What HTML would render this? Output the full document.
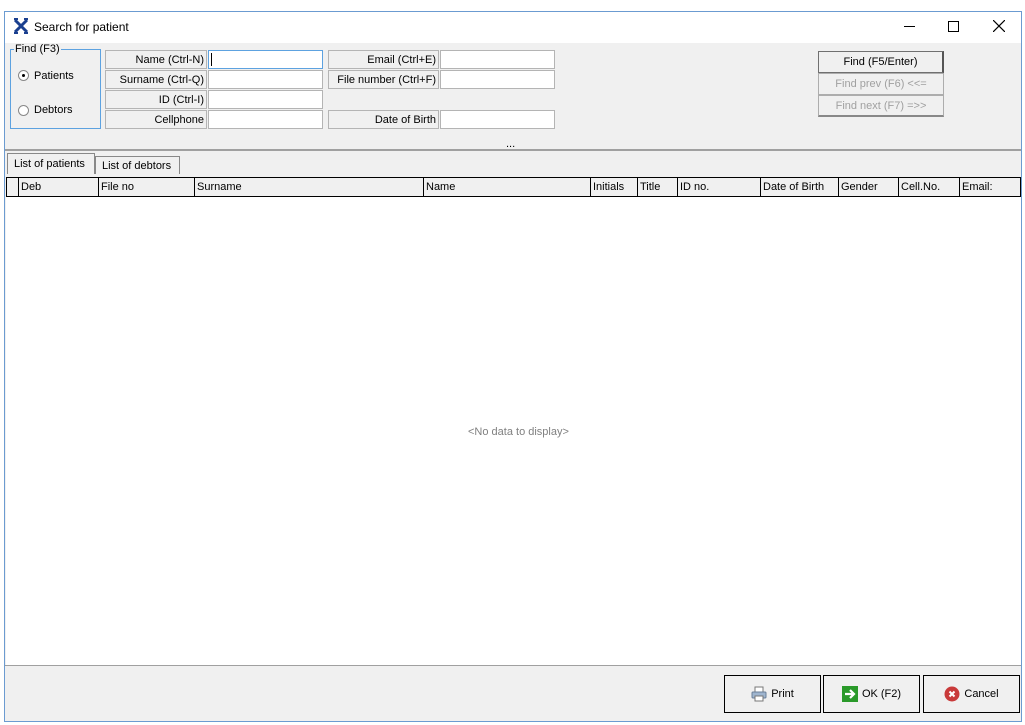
<!DOCTYPE html>
<html><head><style>
*{box-sizing:border-box;margin:0;padding:0}
body{width:1025px;height:725px;background:#fff;font-family:"Liberation Sans",sans-serif;font-size:11px;color:#000;position:relative;overflow:hidden}
.a{position:absolute}
.lbl{position:absolute;border:1px solid #b4b4b4;background:#f0f0f0;text-align:right;padding-right:2px;line-height:19px;height:19px}
.inp{position:absolute;border:1px solid #b4b4b4;background:#fff;height:19px}
.btn{position:absolute;border:1px solid #adadad;background:#f0f0f0;text-align:center;line-height:19px}
.hd{position:absolute;top:0;height:18px;border-left:1px solid #000;line-height:19px;padding-left:2px;white-space:nowrap}
.bb{position:absolute;top:675px;height:38px;border:1px solid #000;background:#f0f0f0;display:flex;align-items:center;justify-content:center;gap:4px;font-size:11px}
</style></head><body>
<div class="a" style="left:4px;top:11px;width:1018px;height:711px;border:1px solid #6b9bd1;background:#f0f0f0"></div>
<div class="a" style="left:5px;top:12px;width:1016px;height:31px;background:#fff"></div>
<svg class="a" style="left:13px;top:18px" width="16" height="16" viewBox="0 0 16 16"><path d="M2 2L14 14M14 2L2 14" stroke="#1a3f8f" stroke-width="3"/><path d="M1 1h4M11 1h4M1 15h4M11 15h4" stroke="#1a3f8f" stroke-width="2"/></svg>
<div class="a" style="left:34px;top:20px;font-size:12px">Search for patient</div>
<div class="a" style="left:904px;top:26px;width:11px;height:1px;background:#000"></div>
<div class="a" style="left:948px;top:21px;width:11px;height:11px;border:1px solid #000"></div>
<svg class="a" style="left:993px;top:20px" width="12" height="12"><path d="M0 0L12 12M12 0L0 12" stroke="#000" stroke-width="1.2"/></svg>

<div class="a" style="left:10px;top:49px;width:91px;height:80px;border:1px solid #5da2e0"></div>
<div class="a" style="left:14px;top:43px;background:#f0f0f0;padding:0 1px">Find (F3)</div>
<div class="a" style="left:18px;top:70px;width:11px;height:11px;border:1px solid #888;border-radius:50%;background:#fff"><div style="margin:3px;width:3px;height:3px;background:#000;border-radius:50%"></div></div>
<div class="a" style="left:34px;top:70px">Patients</div>
<div class="a" style="left:18px;top:105px;width:11px;height:11px;border:1px solid #888;border-radius:50%;background:#fff"></div>
<div class="a" style="left:34px;top:104px">Debtors</div>

<div class="lbl" style="left:105px;top:50px;width:102px">Name (Ctrl-N)</div>
<div class="inp" style="left:208px;top:50px;width:115px;border-color:#5da2e0"><div style="margin:2px 0 0 2px;width:1px;height:13px;background:#000"></div></div>
<div class="lbl" style="left:105px;top:70px;width:102px">Surname (Ctrl-Q)</div>
<div class="inp" style="left:208px;top:70px;width:115px"></div>
<div class="lbl" style="left:105px;top:90px;width:102px">ID (Ctrl-I)</div>
<div class="inp" style="left:208px;top:90px;width:115px"></div>
<div class="lbl" style="left:105px;top:110px;width:102px">Cellphone</div>
<div class="inp" style="left:208px;top:110px;width:115px"></div>
<div class="lbl" style="left:328px;top:50px;width:111px">Email (Ctrl+E)</div>
<div class="inp" style="left:440px;top:50px;width:115px"></div>
<div class="lbl" style="left:328px;top:70px;width:111px">File number (Ctrl+F)</div>
<div class="inp" style="left:440px;top:70px;width:115px"></div>
<div class="lbl" style="left:328px;top:110px;width:111px">Date of Birth</div>
<div class="inp" style="left:440px;top:110px;width:115px"></div>

<div class="btn" style="left:818px;top:51px;width:126px;height:22px;border-color:#707070;border-right:2px solid #555;line-height:21px">Find (F5/Enter)</div>
<div class="btn" style="left:818px;top:73px;width:126px;height:22px;color:#a0a0a0;line-height:20px">Find prev (F6) &lt;&lt;=</div>
<div class="btn" style="left:818px;top:95px;width:126px;height:22px;color:#a0a0a0;border-bottom:2px solid #888;line-height:20px">Find next (F7) =&gt;&gt;</div>

<div class="a" style="left:506px;top:138px">...</div>
<div class="a" style="left:5px;top:149px;width:1016px;height:2px;background:#a0a0a0"></div>

<div class="a" style="left:7px;top:153px;width:88px;height:21px;border:1px solid #888;border-bottom:none;background:#f0f0f0;padding:4px 0 0 6px">List of patients</div>
<div class="a" style="left:95px;top:156px;width:85px;height:18px;border:1px solid #888;border-bottom:none;background:#f0f0f0;padding:3px 0 0 6px">List of debtors</div>

<div class="a" style="left:6px;top:177px;width:1015px;height:20px;border:1px solid #000;background:#f0f0f0">
<div class="hd" style="left:11px;width:80px">Deb</div>
<div class="hd" style="left:91px">File no</div>
<div class="hd" style="left:187px">Surname</div>
<div class="hd" style="left:416px">Name</div>
<div class="hd" style="left:583px">Initials</div>
<div class="hd" style="left:630px">Title</div>
<div class="hd" style="left:670px">ID no.</div>
<div class="hd" style="left:753px">Date of Birth</div>
<div class="hd" style="left:831px">Gender</div>
<div class="hd" style="left:891px">Cell.No.</div>
<div class="hd" style="left:952px">Email:</div>
</div>
<div class="a" style="left:6px;top:197px;width:1015px;height:468px;background:#fff"></div>
<div class="a" style="left:5px;top:665px;width:1016px;height:1px;background:#a0a0a0"></div>
<div class="a" style="left:468px;top:426px;color:#808080">&lt;No data to display&gt;</div>

<div class="bb" style="left:724px;width:97px"><svg width="16" height="16"><rect x="4" y="1" width="8" height="5" fill="#fff" stroke="#777"/><rect x="1" y="6" width="14" height="6" rx="1" fill="#9fb5cf" stroke="#6a7f99"/><rect x="4" y="10" width="8" height="5" fill="#fff" stroke="#777"/></svg>Print</div>
<div class="bb" style="left:823px;width:97px"><svg width="16" height="16"><rect x="0" y="0" width="16" height="16" fill="#2a9a2a"/><path d="M3 8h8M8 4l4 4-4 4" stroke="#fff" stroke-width="2.2" fill="none"/></svg>OK (F2)</div>
<div class="bb" style="left:923px;width:97px"><svg width="16" height="16"><circle cx="8" cy="8" r="7.5" fill="#c93a3a"/><path d="M5.5 5.5l5 5M10.5 5.5l-5 5" stroke="#fff" stroke-width="2"/></svg>Cancel</div>
</body></html>
